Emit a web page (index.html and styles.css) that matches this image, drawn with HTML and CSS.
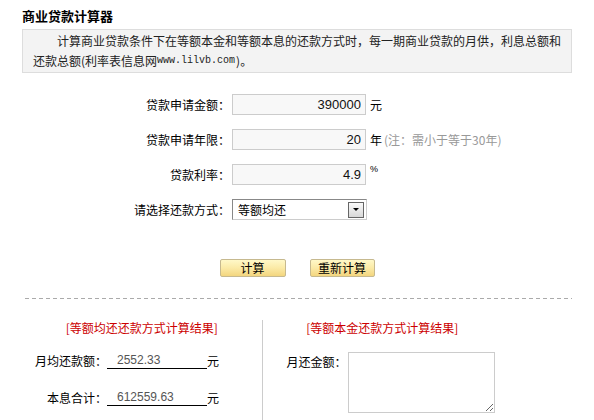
FILE: index.html
```html
<!DOCTYPE html>
<html lang="zh-CN">
<head>
    <meta charset="UTF-8">
    <meta name="viewport" content="width=device-width, initial-scale=1.0">
    <title>商业贷款计算器</title>
    <link rel="stylesheet" href="styles.css">
</head>
<body>
    <div class="page">
        <h1 class="title">商业贷款计算器</h1>

        <!-- 说明 -->
        <div class="intro">计算商业贷款条件下在等额本金和等额本息的还款方式时，每一期商业贷款的月供，利息总额和<br>还款总额(利率表信息网<span class="url">www.lilvb.com</span><span class="tail">)。</span></div>

        <!-- 输入表单 -->
        <div class="form">
            <div class="row">
                <label class="label">贷款申请金额：</label>
                <input class="field" type="text" value="390000">
                <span class="unit">元</span>
            </div>
            <div class="row">
                <label class="label">贷款申请年限：</label>
                <input class="field" type="text" value="20">
                <span class="unit">年</span>
                <span class="note">(注：需小于等于30年)</span>
            </div>
            <div class="row">
                <label class="label">贷款利率：</label>
                <input class="field" type="text" value="4.9">
                <span class="unit unit-small">%</span>
            </div>
            <div class="row">
                <label class="label">请选择还款方式：</label>
                <div class="select">
                    <span class="select-text">等额均还</span>
                    <span class="select-arrow">
                        <svg width="8" height="5" viewBox="0 0 8 5"><path d="M1 1h6L4 4z" fill="#000"/></svg>
                    </span>
                </div>
            </div>
        </div>

        <div class="actions">
            <button class="btn btn-calc">计算</button>
            <button class="btn btn-reset">重新计算</button>
        </div>

        <div class="divider"></div>

        <!-- 计算结果 -->
        <div class="results">
            <div class="col col-left">
                <div class="col-title">[等额均还还款方式计算结果]</div>
                <div class="res-row res-first">
                    <span class="res-label">月均还款额：</span>
                    <span class="res-value">2552.33</span>
                    <span class="res-unit">元</span>
                </div>
                <div class="res-row">
                    <span class="res-label">本息合计：</span>
                    <span class="res-value">612559.63</span>
                    <span class="res-unit">元</span>
                </div>
            </div>
            <div class="col">
                <div class="col-title">[等额本金还款方式计算结果]</div>
                <div class="res-row res-first res-top">
                    <span class="res-label res-label-wide">月还金额：</span>
                    <textarea class="res-box"></textarea>
                </div>
            </div>
        </div>
    </div>
</body>
</html>
```

FILE: styles.css
```css
body {
    margin: 0;
    font-family: "Noto Sans CJK SC", "DejaVu Sans", sans-serif;
    font-size: 12px;
    color: #000;
    background: #fff;
    overflow: hidden;
}

.page {
    width: 550px;
    margin-left: 22px;
}

.title {
    margin: 8px 0 0;
    font-size: 13px;
    line-height: 16px;
    font-weight: bold;
}

.intro {
    margin-top: 5px;
    padding: 1px 9px 1px 10px;
    border: 1px solid #ddd;
    background: #f3f3f3;
    line-height: 20px;
    text-indent: 2em;
    color: #222;
}

.url {
    display: inline-block;
    margin-right: 1px;
    text-indent: 0;
    font-family: "Liberation Mono", monospace;
    font-size: 10px;
    line-height: 20px;
    vertical-align: top;
}

.tail {
    display: inline-block;
    text-indent: 0;
    vertical-align: top;
}

.form {
    margin-top: 21px;
    display: flex;
    flex-direction: column;
    gap: 14px;
}

.row {
    display: flex;
    align-items: center;
    height: 21px;
}

.label {
    width: 208px;
    margin-right: 2px;
    text-align: right;
}

.field {
    box-sizing: border-box;
    width: 134px;
    height: 21px;
    margin: 0;
    padding: 0 4px 0 0;
    border: 1px solid #ccc;
    background: #f8f8f8;
    text-align: right;
    font-family: "Liberation Sans", Arial, sans-serif;
    font-size: 13px;
    color: #111;
}

.unit {
    margin-left: 4px;
}

.unit-small {
    font-family: "Liberation Sans", Arial, sans-serif;
    font-size: 9px;
    align-self: flex-start;
}

.note {
    margin-left: 2px;
    color: #999;
}

.select {
    box-sizing: border-box;
    width: 135px;
    height: 21px;
    display: flex;
    align-items: center;
    justify-content: space-between;
    border: 1px solid #888;
    border-right-color: #ccc;
    border-bottom-color: #ccc;
    background: #fff;
    padding: 0 2px 0 5px;
}

.select-arrow {
    box-sizing: border-box;
    width: 16px;
    height: 16px;
    display: flex;
    align-items: center;
    justify-content: center;
    border: 1px solid #666;
    background: linear-gradient(#fafafa, #d8d8d8);
}

.actions {
    margin-top: 39px;
    display: flex;
    justify-content: center;
    gap: 24px;
}

.btn {
    box-sizing: border-box;
    width: 66px;
    height: 18px;
    margin: 0;
    padding: 0;
    border: 1px solid #c6b98f;
    border-radius: 2px;
    background: linear-gradient(#fff8c8 0%, #fbeaa6 50%, #f3d67f 100%);
    font-family: "Noto Sans CJK SC", sans-serif;
    font-size: 12px;
    line-height: 16px;
    color: #000;
    cursor: pointer;
}

.btn-reset {
    width: 65px;
}

.divider {
    margin: 21px 0 0 3px;
    width: 547px;
    height: 1px;
    background: repeating-linear-gradient(90deg, #aaa 0 4px, transparent 4px 7px);
}

.results {
    margin-top: 21px;
    display: flex;
    width: 480px;
}

.col {
    width: 240px;
    min-height: 110px;
}

.col-left {
    border-right: 1px solid #ccc;
}

.col-title {
    line-height: 16px;
    text-align: center;
    color: #c00;
}

.res-row {
    display: flex;
    align-items: flex-end;
    margin-top: 20px;
    line-height: 16px;
}

.res-first {
    margin-top: 16px;
}

.res-top {
    align-items: flex-start;
}

.res-label {
    width: 85px;
    text-align: right;
}

.res-label-wide {
    width: 84px;
    line-height: 20px;
    margin-right: 1px;
}

.res-value {
    box-sizing: border-box;
    width: 100px;
    padding-left: 10px;
    border-bottom: 1px solid #000;
    font-family: "Liberation Sans", Arial, sans-serif;
    font-size: 12px;
    color: #555;
}

.res-box {
    box-sizing: border-box;
    width: 147px;
    height: 61px;
    margin: 0;
    border: 1px solid #ccc;
    background: #fff;
}
```
